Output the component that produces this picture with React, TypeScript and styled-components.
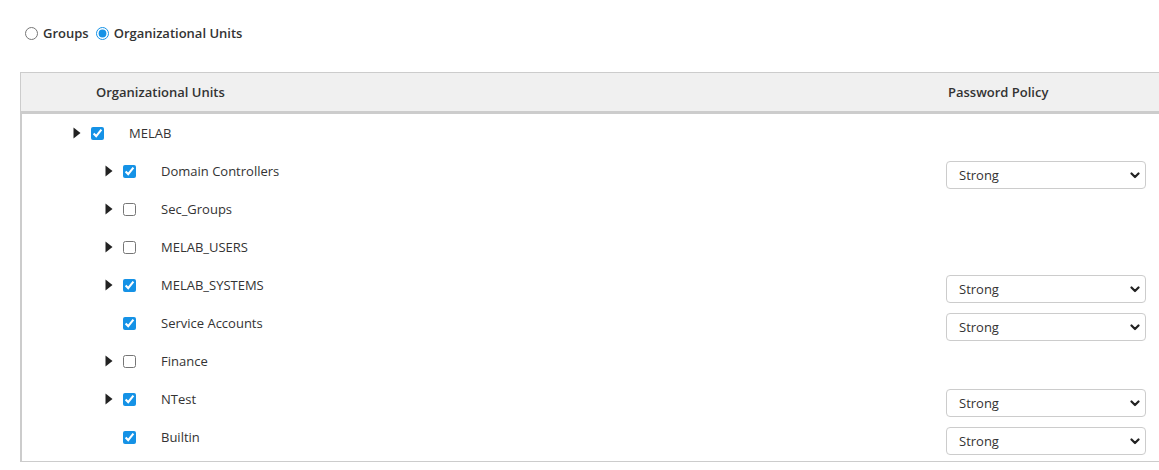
import React from "react";
import styled, { createGlobalStyle } from "styled-components";

const GlobalStyle = createGlobalStyle`
  html, body {
    margin: 0;
    padding: 0;
    background: #ffffff;
    font-family: "Open Sans", "Noto Sans", sans-serif;
    font-size: 13px;
    color: #333333;
    overflow: hidden;
  }
`;

const Page = styled.div`
  padding: 20px 0 0 20px;
  width: 1159px;
  box-sizing: border-box;
`;

const ModeBar = styled.div`
  display: flex;
  align-items: center;
  height: 26px;
  padding-left: 5px;
`;

const ModeOption = styled.label`
  display: flex;
  align-items: center;
  gap: 5px;
  margin-right: 7px;
  font-weight: 600;
  color: #333;
  cursor: pointer;
`;

const Radio = styled.input.attrs({ type: "radio" })`
  margin: 0;
  width: 13px;
  height: 13px;
  accent-color: #1592e6;
`;

const Table = styled.div`
  margin-top: 26px;
  border-top: 1px solid #cccccc;
  border-left: 1px solid #cccccc;
  border-bottom: 1px solid #cccccc;
`;

const HeaderRow = styled.div`
  display: grid;
  grid-template-columns: 915px 1fr;
  height: 38px;
  align-items: center;
  background: #f0f0f0;
  border-bottom: 3px solid #cccccc;
  font-weight: 600;
  color: #333;
`;

const HeadCell = styled.div<{ $pad: number }>`
  padding-left: ${(p) => p.$pad}px;
`;

const Body = styled.div`
  border-left: 1px solid #cccccc;
  padding-bottom: 5px;
`;

const Row = styled.div`
  display: grid;
  grid-template-columns: 914px 1fr;
  height: 38px;
`;

const TreeCell = styled.div<{ $level: number }>`
  display: flex;
  align-items: center;
  padding-left: ${(p) => 51 + p.$level * 32}px;
`;

const Caret = styled.span<{ $show: boolean }>`
  width: 8px;
  height: 12px;
  flex: none;
  display: flex;
  align-items: center;
  visibility: ${(p) => (p.$show ? "visible" : "hidden")};
`;

const Check = styled.input.attrs({ type: "checkbox" })`
  margin: 0 0 0 10px;
  width: 13px;
  height: 13px;
  flex: none;
  accent-color: #1592e6;
`;

const Label = styled.span`
  margin-left: 25px;
  color: #333;
`;

const PolicyCell = styled.div`
  padding: 9px 0 0 10px;
`;

const SelectWrap = styled.div`
  position: relative;
  width: 200px;
  height: 28px;
`;

const Select = styled.select`
  appearance: none;
  -webkit-appearance: none;
  width: 100%;
  height: 100%;
  box-sizing: border-box;
  border: 1px solid #cccccc;
  border-radius: 4px;
  background: #fff;
  padding: 0 24px 0 12px;
  font-family: "Open Sans", "Noto Sans", sans-serif;
  font-size: 13px;
  color: #333;
  outline: none;
`;

const Chevron = styled.svg`
  position: absolute;
  right: 6px;
  top: 11px;
  pointer-events: none;
`;

type Unit = {
  name: string;
  level: number;
  expandable: boolean;
  checked: boolean;
  policy?: string;
};

const units: Unit[] = [
  { name: "MELAB", level: 0, expandable: true, checked: true },
  { name: "Domain Controllers", level: 1, expandable: true, checked: true, policy: "Strong" },
  { name: "Sec_Groups", level: 1, expandable: true, checked: false },
  { name: "MELAB_USERS", level: 1, expandable: true, checked: false },
  { name: "MELAB_SYSTEMS", level: 1, expandable: true, checked: true, policy: "Strong" },
  { name: "Service Accounts", level: 1, expandable: false, checked: true, policy: "Strong" },
  { name: "Finance", level: 1, expandable: true, checked: false },
  { name: "NTest", level: 1, expandable: true, checked: true, policy: "Strong" },
  { name: "Builtin", level: 1, expandable: false, checked: true, policy: "Strong" },
];

export default function App() {
  return (
    <>
      <GlobalStyle />
      <Page>
        <ModeBar>
          <ModeOption>
            <Radio name="mode" />
            Groups
          </ModeOption>
          <ModeOption>
            <Radio name="mode" defaultChecked />
            Organizational Units
          </ModeOption>
        </ModeBar>
        <Table>
          <HeaderRow>
            <HeadCell $pad={75}>Organizational Units</HeadCell>
            <HeadCell $pad={12}>Password Policy</HeadCell>
          </HeaderRow>
          <Body>
            {units.map((u) => (
              <Row key={u.name}>
                <TreeCell $level={u.level}>
                  <Caret $show={u.expandable}>
                    <svg width="8" height="12" viewBox="0 0 8 12">
                      <path d="M0.5 0.5 L7.5 6 L0.5 11.5 Z" fill="#222" />
                    </svg>
                  </Caret>
                  <Check defaultChecked={u.checked} />
                  <Label>{u.name}</Label>
                </TreeCell>
                <PolicyCell>
                  {u.policy && (
                    <SelectWrap>
                      <Select defaultValue={u.policy}>
                        <option>Strong</option>
                        <option>Medium</option>
                        <option>Weak</option>
                      </Select>
                      <Chevron width="10" height="7" viewBox="0 0 10 7">
                        <path
                          d="M1.5 1.5 L5 5 L8.5 1.5"
                          fill="none"
                          stroke="#222"
                          strokeWidth="2.2"
                          strokeLinecap="round"
                          strokeLinejoin="round"
                        />
                      </Chevron>
                    </SelectWrap>
                  )}
                </PolicyCell>
              </Row>
            ))}
          </Body>
        </Table>
      </Page>
    </>
  );
}
